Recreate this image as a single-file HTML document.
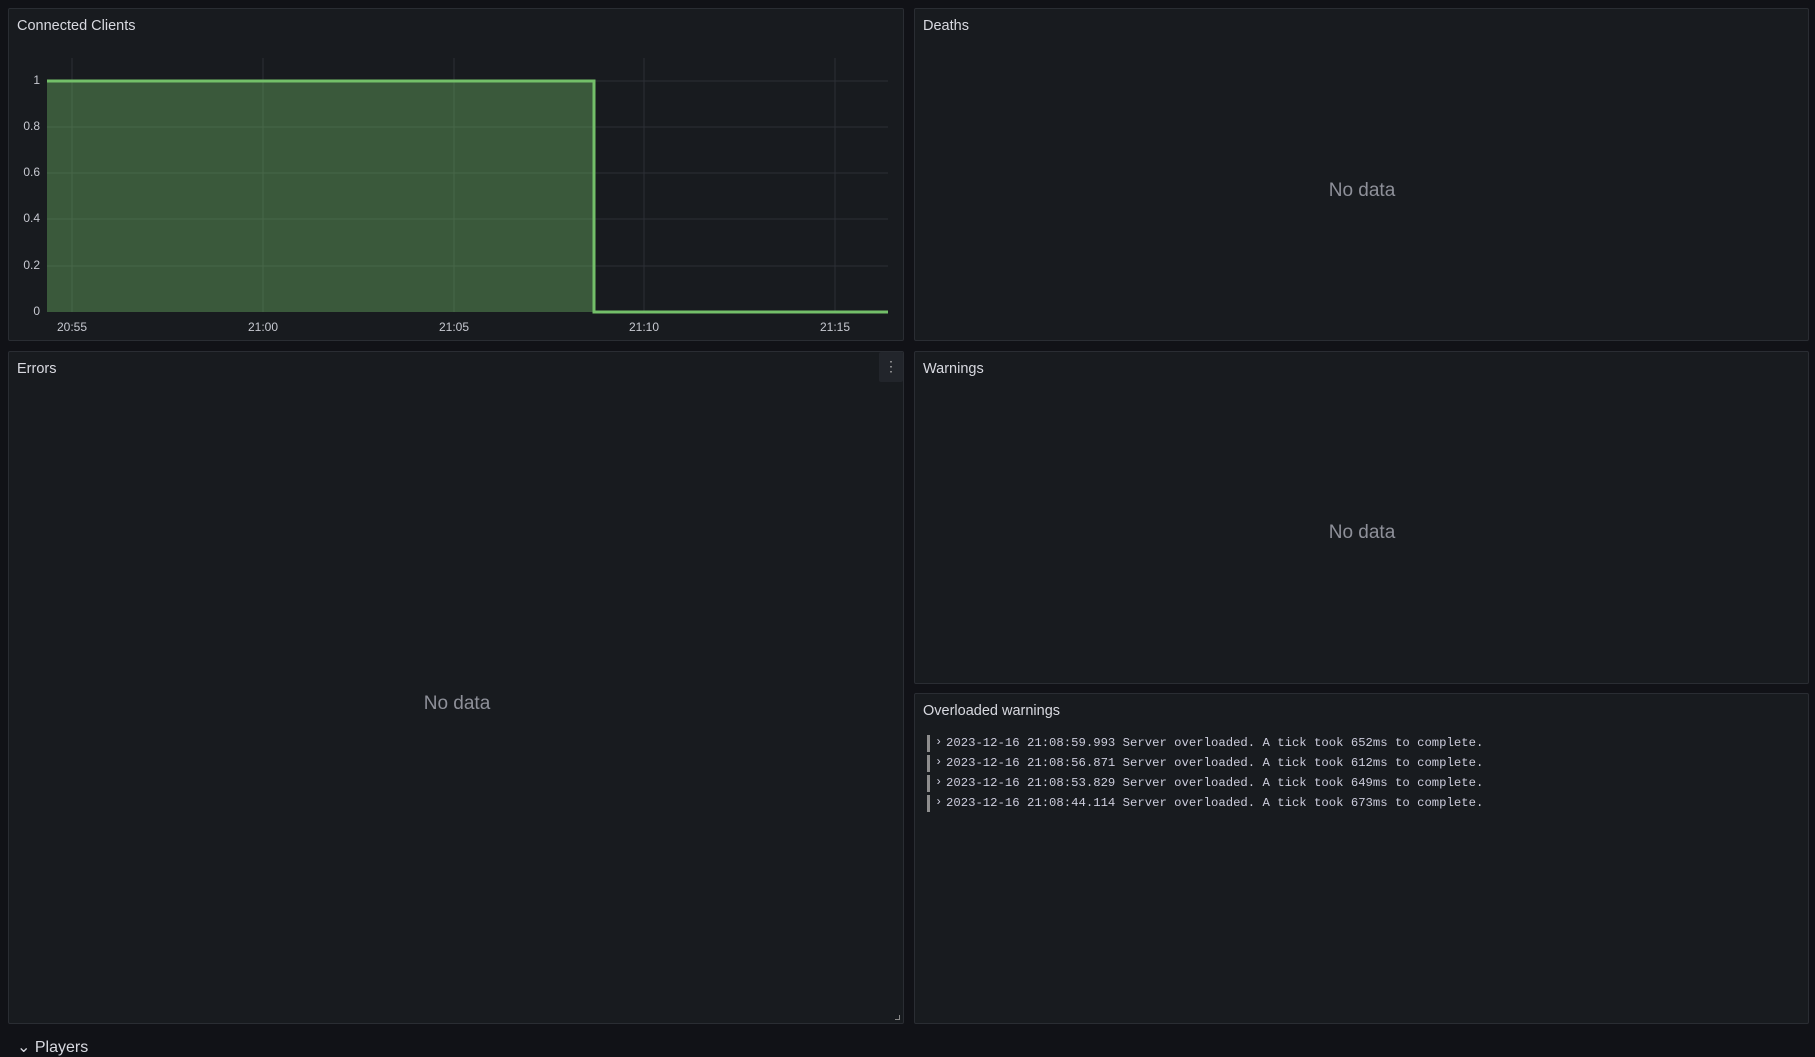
<!DOCTYPE html>
<html><head><meta charset="utf-8"><style>
*{box-sizing:border-box;margin:0;padding:0}
body{width:1815px;height:1055px;background:#111217;font-family:"Liberation Sans",sans-serif;color:#ccccdc;position:relative;overflow:hidden}
.p{position:absolute;background:#181b1f;border:1px solid #2a2d33;border-radius:2px}
.t{position:absolute;left:8px;top:9px;font-size:14.5px;font-weight:500;color:#d8d9e0}
.nd{position:absolute;font-size:19px;color:#8e9099;transform:translate(-50%,-50%)}
.log{position:absolute;left:12px;font-family:"Liberation Mono",monospace;font-size:12.27px;color:#ccccdc;white-space:pre;height:20px;line-height:20px;width:700px}
.log:before{content:"";position:absolute;left:0;top:2px;width:3px;height:17px;background:#8e8e8e}
.log span{position:absolute;left:8px;top:-1px;font-size:12px;color:#ccccdc}
.log b{position:absolute;left:19px;top:0;font-weight:normal}
</style></head><body>
<div class="p" style="left:8px;top:8px;width:896px;height:333px">
<div class="t">Connected Clients</div></div>
<svg width="1815" height="345" style="position:absolute;left:0;top:0" font-family="Liberation Sans" font-size="12" fill="#c7c9d1">
<g stroke="#2c2f35" stroke-width="1">
<line x1="47" y1="81" x2="888" y2="81"/><line x1="47" y1="127" x2="888" y2="127"/><line x1="47" y1="173" x2="888" y2="173"/><line x1="47" y1="219" x2="888" y2="219"/><line x1="47" y1="266" x2="888" y2="266"/>
<line x1="72" y1="58" x2="72" y2="312"/><line x1="263" y1="58" x2="263" y2="312"/><line x1="454" y1="58" x2="454" y2="312"/><line x1="644" y1="58" x2="644" y2="312"/><line x1="835" y1="58" x2="835" y2="312"/>
</g>
<rect x="47" y="81" width="547" height="231" fill="#73bf69" fill-opacity="0.38"/>
<polyline points="47,81 594,81 594,312 888,312" fill="none" stroke="#73bf69" stroke-width="3"/>
<g text-anchor="end"><text x="40" y="84">1</text><text x="40" y="130">0.8</text><text x="40" y="176">0.6</text><text x="40" y="222">0.4</text><text x="40" y="269">0.2</text><text x="40" y="315">0</text></g>
<g text-anchor="middle"><text x="72" y="331">20:55</text><text x="263" y="331">21:00</text><text x="454" y="331">21:05</text><text x="644" y="331">21:10</text><text x="835" y="331">21:15</text></g>
</svg>
<div class="p" style="left:914px;top:8px;width:895px;height:333px"><div class="t">Deaths</div><div class="nd" style="left:447px;top:182px">No data</div></div>
<div class="p" style="left:8px;top:351px;width:896px;height:673px"><div class="t">Errors</div>
<div style="position:absolute;right:0;top:0;width:24px;height:30px;background:#22252b;border-radius:2px;color:#aaa;font-size:14px;text-align:center;line-height:29px">&#8942;</div>
<div class="nd" style="left:448px;top:352px">No data</div>
<div style="position:absolute;right:3px;bottom:3px;width:5px;height:5px;border-right:1px solid #888;border-bottom:1px solid #888"></div></div>
<div class="p" style="left:914px;top:351px;width:895px;height:333px"><div class="t">Warnings</div><div class="nd" style="left:447px;top:181px">No data</div></div>
<div class="p" style="left:914px;top:693px;width:895px;height:331px"><div class="t">Overloaded warnings</div>
<div class="log" style="top:39px"><span>&#8250;</span><b>2023-12-16 21:08:59.993 Server overloaded. A tick took 652ms to complete.</b></div>
<div class="log" style="top:59px"><span>&#8250;</span><b>2023-12-16 21:08:56.871 Server overloaded. A tick took 612ms to complete.</b></div>
<div class="log" style="top:79px"><span>&#8250;</span><b>2023-12-16 21:08:53.829 Server overloaded. A tick took 649ms to complete.</b></div>
<div class="log" style="top:99px"><span>&#8250;</span><b>2023-12-16 21:08:44.114 Server overloaded. A tick took 673ms to complete.</b></div>
</div>
<div style="position:absolute;left:17px;top:1037px;font-size:16px;color:#d8d9e0;font-weight:500">&#8964; Players</div>
</body></html>
